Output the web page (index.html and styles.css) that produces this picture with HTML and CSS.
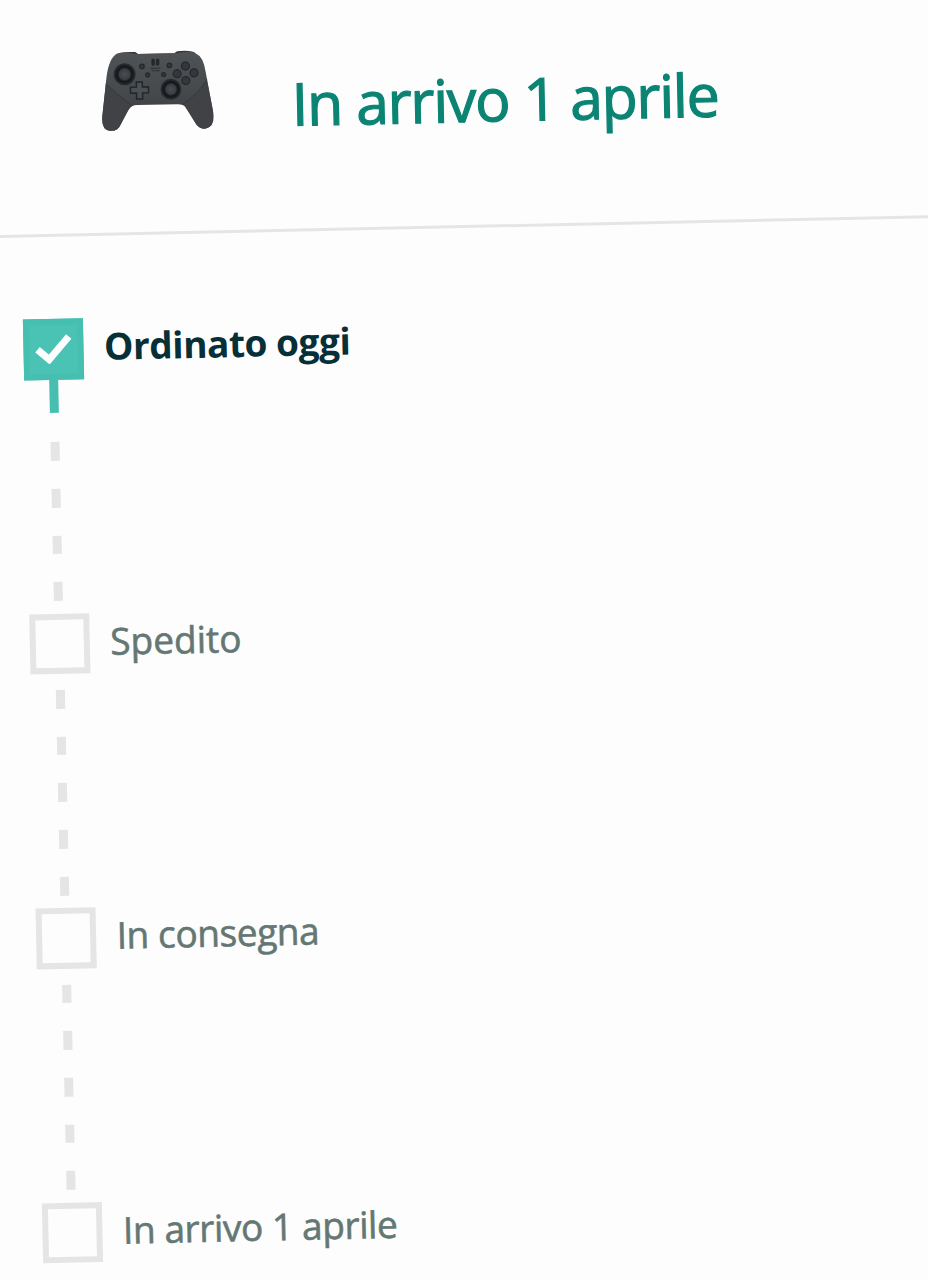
FILE: index.html
```html
<!DOCTYPE html>
<html lang="it">
<head>
<meta charset="utf-8">
<title>In arrivo 1 aprile</title>
<link rel="stylesheet" href="styles.css">
</head>
<body>
<main class="sheet">
  <header class="header">
    <svg class="product" viewBox="0 0 112 80" aria-label="Controller">
      <defs>
        <linearGradient id="body" x1="0" y1="0" x2="0" y2="1">
          <stop offset="0" stop-color="#505356"/><stop offset=".55" stop-color="#46494c"/><stop offset="1" stop-color="#37393c"/>
        </linearGradient>
        <radialGradient id="stick"><stop offset="0" stop-color="#4a4e52"/><stop offset=".55" stop-color="#3a3e42"/><stop offset=".75" stop-color="#15181a"/><stop offset="1" stop-color="#1c1f22"/></radialGradient>
      </defs>
      <path d="M17 3Q19 0 35 1L38 3H74L77 1Q93 0 96 4Z" fill="#34373a"/>
      <path d="M17 2Q25 0 36 3H76Q91 0 96 4Q103 7 105 22L112 64Q113 77 104 79Q97 80 93 72L84 57Q82 54 76 54H36Q30 54 27 59L19 73Q16 80 8 79Q-1 78 1 63L6 24Q9 6 17 2Z" fill="url(#body)"/>
      <path d="M5 32Q15 42 30 54Q27 57 19 73Q16 80 8 79Q-1 78 1 63ZM106 30Q99 42 82 54Q84 56 93 72Q97 80 104 79Q113 77 112 64Z" fill="#404245"/>
      <path d="M5 32Q15 42 30 54M106 30Q99 42 82 54" fill="none" stroke="#333538" stroke-width=".8"/>
      <circle cx="24" cy="23" r="11" fill="#292c2f"/><circle cx="24" cy="23" r="9.500" fill="url(#stick)"/>
      <circle cx="70" cy="39" r="10.500" fill="#292c2f"/><circle cx="70" cy="39" r="9" fill="url(#stick)"/>
      <path d="M35.500 31H41.500V36H47.500V42H41.500V48H35.500V42H29.500V36H35.500Z" fill="#4b5054" stroke="#222529" stroke-width="1.500"/>
      <g fill="#34383c" stroke="#25282b" stroke-width="1.200">
        <circle cx="85" cy="16" r="4"/><circle cx="76.500" cy="23.500" r="4"/><circle cx="93.500" cy="23" r="4"/><circle cx="85" cy="30.500" r="4"/>
        <circle cx="41.500" cy="15.500" r="2.300"/><circle cx="69" cy="15" r="2.300"/><circle cx="47" cy="24" r="2"/><circle cx="63" cy="24" r="2"/>
      </g>
      <rect x="51" y="8" width="3.500" height="7" rx="1.500" fill="#25282a"/><rect x="55.500" y="8" width="3.500" height="7" rx="1.500" fill="#25282a"/>
      <path d="M50 17.500H60M51 20H59" stroke="#303437" stroke-width="1.200"/>
    </svg>
    <h1 class="title">In arrivo 1 aprile</h1>
  </header>
  <ol class="steps">
    <li class="step">
      <div class="row">
        <span class="box done"><svg class="check" viewBox="0 0 38 30"><path d="M3 15.500L14.500 25.500L34.500 3" fill="none" stroke="#fdfefe" stroke-width="7"/></svg></span>
        <span class="label current">Ordinato oggi</span>
      </div>
      <div class="track"><i class="stem"></i><i class="dash"></i><i class="dash"></i><i class="dash"></i><i class="dash"></i></div>
    </li>
    <li class="step">
      <div class="row"><span class="box"></span><span class="label shipped">Spedito</span></div>
      <div class="track"><i class="dash"></i><i class="dash"></i><i class="dash"></i><i class="dash"></i><i class="dash"></i></div>
    </li>
    <li class="step">
      <div class="row"><span class="box"></span><span class="label">In consegna</span></div>
      <div class="track"><i class="dash"></i><i class="dash"></i><i class="dash"></i><i class="dash"></i><i class="dash"></i></div>
    </li>
    <li class="step last">
      <div class="row"><span class="box"></span><span class="label">In arrivo 1 aprile</span></div>
    </li>
  </ol>
</main>
</body>
</html>
```
FILE: styles.css
```css
* { box-sizing: border-box; }
html { overflow: hidden; background: #fdfdfd; }
body { margin: 0; width: 928px; height: 1280px; overflow: hidden; font-family: "Open Sans", sans-serif; }
.sheet { width: 960px; height: 1270px; margin-left: -20px; transform: rotate(-1.23deg); transform-origin: 20px 0; }
.header { display: flex; align-items: flex-start; height: 238px; padding: 54px 0 0 118.5px; border-bottom: 3px solid #e5e5e6; }
.product { width: 112px; height: 80px; flex: none; }
.title { margin: 15px 0 0 79px; font-size: 59px; line-height: 80px; font-weight: 400; letter-spacing: -1.25px; color: #0b8474; white-space: nowrap; -webkit-text-stroke: 1.2px #0b8474; }
.steps { list-style: none; margin: 0; padding: 82px 0 0 35.5px; }
.step { height: 294.5px; }
.last { height: 60.5px; }
.row { display: flex; align-items: center; gap: 21px; height: 60.5px; }
.box { display: flex; align-items: center; justify-content: center; flex: none; width: 60px; height: 60.5px; border: 6.5px solid #e5e5e6; }
.done { border-color: #46bfb0; background: #4ac3b4; }
.check { width: 38px; height: 30px; flex: none; }
.label { padding-bottom: 4px; font-size: 37px; line-height: 50px; letter-spacing: -0.4px; color: #657773; white-space: nowrap; -webkit-text-stroke: 0.6px #657773; }
.shipped { letter-spacing: 0; }
.current { font-weight: 700; letter-spacing: -0.45px; color: #062f38; -webkit-text-stroke: 0; }
.track { display: flex; flex-direction: column; align-items: center; justify-content: flex-end; gap: 28px; width: 60px; height: 234px; padding-bottom: 12.5px; }
.stem { width: 9.5px; height: 33px; margin-bottom: auto; background: #46bfb0; flex: none; }
.dash { width: 9.5px; height: 18.7px; background: #e5e5e6; flex: none; }
```
